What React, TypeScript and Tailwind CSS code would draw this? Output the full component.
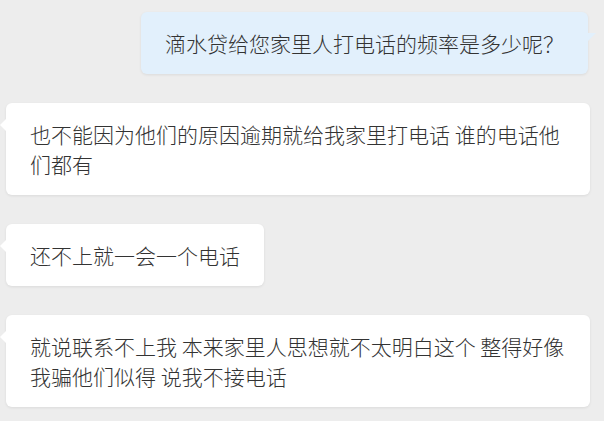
import React from 'react';

const font = { fontFamily: '"Microsoft YaHei", "Noto Sans CJK SC", "Noto Sans", sans-serif' };

function LeftBubble({ text }: { text: string }) {
  return (
    <div className="relative ml-[6px] w-fit max-w-[584px] rounded-md bg-white px-6 py-4 shadow-[0_1px_3px_rgba(0,0,0,0.08)]">
      {/* tail */}
      <div className="absolute right-full top-[16px] h-0 w-0 border-y-[6px] border-r-[6px] border-y-transparent border-r-white" />
      <p className="text-[21px] font-light leading-[30px] text-[#333333]">{text}</p>
    </div>
  );
}

export default function App() {
  return (
    <div className="flex h-[421px] w-[604px] flex-col gap-[29px] overflow-hidden bg-[#ededed] pt-3" style={font}>
      <div className="relative mr-4 self-end rounded-md bg-[#e2f0fc] px-6 py-4 shadow-[0_1px_3px_rgba(0,0,0,0.08)]">
        <div className="absolute left-full top-[21px] h-0 w-0 border-r-[8px] border-t-[8px] border-r-transparent border-t-[#e2f0fc]" />
        <p className="text-[21px] font-light leading-[30px] text-[#333333]">滴水贷给您家里人打电话的频率是多少呢？</p>
      </div>

      <LeftBubble text="也不能因为他们的原因逾期就给我家里打电话 谁的电话他们都有" />
      <LeftBubble text="还不上就一会一个电话" />
      <LeftBubble text="就说联系不上我 本来家里人思想就不太明白这个 整得好像我骗他们似得 说我不接电话" />
    </div>
  );
}
